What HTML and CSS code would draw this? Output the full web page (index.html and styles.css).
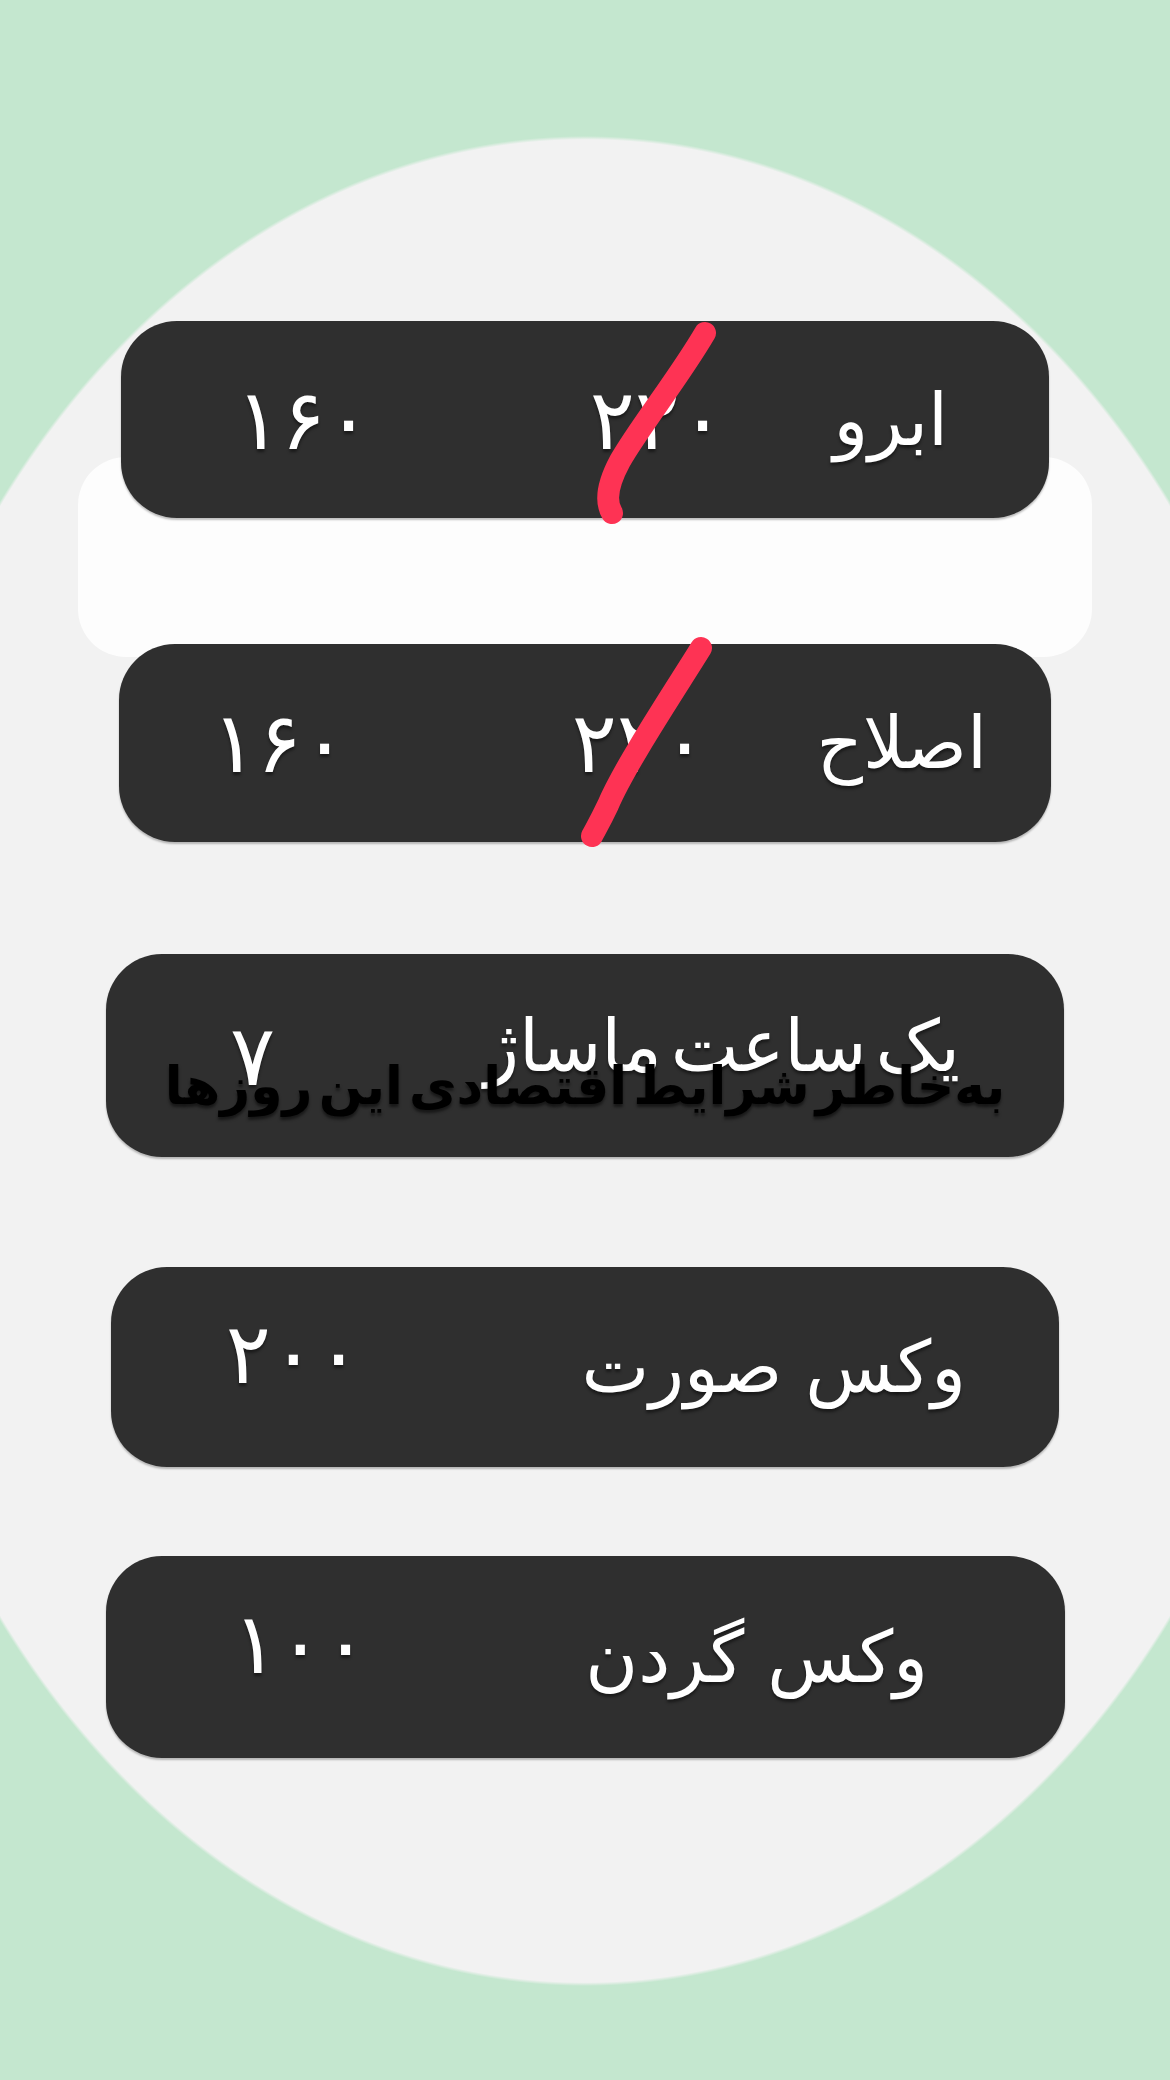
FILE: index.html
```html
<!DOCTYPE html>
<html lang="fa">
<head>
    <meta charset="UTF-8">
    <meta name="viewport" content="width=device-width, initial-scale=1.0">
    <title>لیست قیمت</title>
    <link rel="stylesheet" href="styles.css">
</head>
<body>
    <div class="page">
        <div class="top-group">
            <div class="card card-abru">
                <span class="name">ابرو</span>
                <span class="old">۲۲۰</span>
                <span class="price">۱۶۰</span>
                <svg class="strike strike-abru" width="140" height="210" viewBox="0 0 140 210">
                    <path d="M115 12 C 88 58 48 108 30 140 C 16 166 16 182 22 192" />
                </svg>
            </div>
            <div class="panel"></div>
            <div class="card card-eslah">
                <span class="name">اصلاح</span>
                <span class="old">۲۲۰</span>
                <span class="price">۱۶۰</span>
                <svg class="strike strike-eslah" width="140" height="210" viewBox="0 0 140 210">
                    <path d="M121 8 C 95 50 45 125 28 165 C 20 182 15 190 12 196" />
                </svg>
            </div>
        </div>

        <div class="card card-massage">
            <span class="name">یک ساعت ماساژ</span>
            <span class="price">۷</span>
            <span class="note">به‌خاطر شرایط اقتصادی این روزها</span>
        </div>

        <div class="card card-face">
            <span class="name">وکس صورت</span>
            <span class="price">۲۰۰</span>
        </div>

        <div class="card card-neck">
            <span class="name">وکس گردن</span>
            <span class="price">۱۰۰</span>
        </div>
    </div>
</body>
</html>
```

FILE: styles.css
```css
body {
    margin: 0;
    min-height: 2080px;
    font-family: "DejaVu Sans", sans-serif;
    background-color: #c4e7cf;
    background-image: radial-gradient(ellipse 735px 925px at 585px 1061px, #f2f2f2 99.6%, #c4e7cf 100%);
    background-repeat: no-repeat;
}
.page {
    padding-top: 321px;
    display: flex;
    flex-direction: column;
}
.top-group {
    display: grid;
    grid-template-rows: 136px 61px 126px 13px 185px;
}
.panel {
    grid-row: 2 / 5;
    grid-column: 1;
    margin-left: 78px;
    width: 1014px;
    background-color: #fdfdfd;
    border-radius: 48px;
}
.card {
    position: relative;
    display: grid;
    direction: rtl;
    align-items: center;
    box-sizing: border-box;
    background-color: #2f2f2f;
    border-radius: 56px;
    box-shadow: 0 2px 2px rgba(0, 0, 0, 0.25);
    color: #fff;
    font-size: 72px;
    line-height: 1;
    text-shadow: 0 3px 3px rgba(0, 0, 0, 0.45);
    white-space: nowrap;
}
.card .price,
.card .old {
    font-size: 84px;
}
.card-abru {
    grid-row: 1 / 3;
    grid-column: 1;
    z-index: 1;
    margin-left: 121px;
    width: 928px;
    padding-right: 101px;
    grid-template-columns: 223px 354px 1fr;
}
.card-eslah {
    grid-row: 4 / 6;
    grid-column: 1;
    z-index: 1;
    margin-left: 119px;
    width: 932px;
    padding-right: 64px;
    grid-template-columns: 280px 360px 1fr;
}
.card-massage {
    margin: 112px 0 0 106px;
    width: 958px;
    height: 203px;
    padding-right: 104px;
    grid-template-columns: 685px 1fr;
}
.card-massage .name {
    word-spacing: -14px;
    margin-top: -20px;
}
.card-face {
    margin: 110px 0 0 111px;
    width: 948px;
    height: 200px;
    padding-right: 93px;
    grid-template-columns: 605px 1fr;
}
.card-neck {
    margin: 89px 0 0 106px;
    width: 959px;
    height: 202px;
    padding-right: 137px;
    grid-template-columns: 560px 1fr;
}
.card-face .price,
.card-neck .price {
    margin-bottom: 26px;
}
.strike {
    position: absolute;
    top: 0;
    overflow: visible;
}
.strike path {
    fill: none;
    stroke: #fe3354;
    stroke-width: 22;
    stroke-linecap: round;
}
.strike-abru {
    left: 469px;
}
.strike-eslah {
    left: 461px;
    top: -4px;
}
.note {
    position: absolute;
    left: 0;
    right: 0;
    top: 106px;
    text-align: center;
    color: #000;
    font-weight: bold;
    font-size: 52px;
    word-spacing: -12px;
    text-shadow: 0 3px 3px rgba(0, 0, 0, 0.5);
}
```
